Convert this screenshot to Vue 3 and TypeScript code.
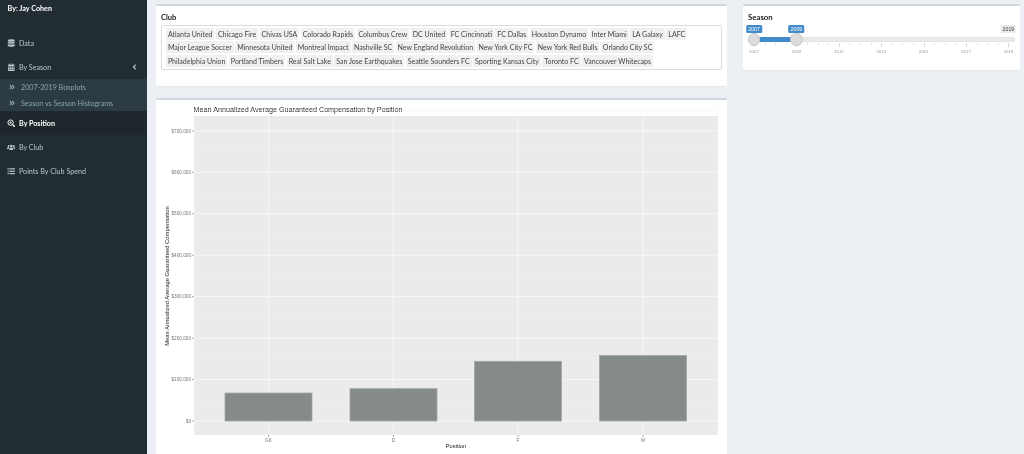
<script setup lang="ts">
interface NavItem { label: string; icon: string; active?: boolean; caret?: boolean }

const navTop: NavItem[] = [
  { label: 'Data', icon: 'db' },
  { label: 'By Season', icon: 'cal', caret: true },
]
const subItems = ['2007-2019 Boxplots', 'Season vs Season Histograms']
const navBottom: NavItem[] = [
  { label: 'By Position', icon: 'search', active: true },
  { label: 'By Club', icon: 'users' },
  { label: 'Points By Club Spend', icon: 'list' },
]

const clubRows = [
  ['Atlanta United', 'Chicago Fire', 'Chivas USA', 'Colorado Rapids', 'Columbus Crew', 'DC United', 'FC Cincinnati', 'FC Dallas', 'Houston Dynamo', 'Inter Miami', 'LA Galaxy', 'LAFC'],
  ['Major League Soccer', 'Minnesota United', 'Montreal Impact', 'Nashville SC', 'New England Revolution', 'New York City FC', 'New York Red Bulls', 'Orlando City SC'],
  ['Philadelphia Union', 'Portland Timbers', 'Real Salt Lake', 'San Jose Earthquakes', 'Seattle Sounders FC', 'Sporting Kansas City', 'Toronto FC', 'Vancouver Whitecaps'],
]

// slider geometry, in px from the left of the slider area
const sliderStart = 11
const sliderStep = 21.2
const ticks = Array.from({ length: 13 }, (_, i) => ({
  year: 2007 + i,
  x: sliderStart + i * sliderStep,
  major: i % 2 === 0,
}))
const minorTicks: number[] = []
for (let i = 0; i < 12; i += 2) {
  for (let j = 1; j < 4; j += 1) minorTicks.push(sliderStart + (i + j / 2) * sliderStep)
}

// plot geometry, in px from the top-left of the plot area
const panel = { x: 38, y: 16, w: 524, h: 319 }
const zeroY = 321
const perHundred = 41.45
const yFor = (v: number) => zeroY - v * perHundred
const majors = [0, 1, 2, 3, 4, 5, 6, 7]
const minors = [0.5, 1.5, 2.5, 3.5, 4.5, 5.5, 6.5, 7.5]
const money = (v: number) => (v === 0 ? '$0' : `$${v}00,000`)
const bars = [
  { pos: 'GK', cx: 112.5, value: 0.675 },
  { pos: 'D', cx: 237.5, value: 0.78 },
  { pos: 'F', cx: 362, value: 1.44 },
  { pos: 'M', cx: 487, value: 1.58 },
]
</script>

<template>
  <div class="page">
    <aside class="sidebar">
      <div class="brand">By: Jay Cohen</div>
      <nav class="nav">
        <div v-for="item in navTop" :key="item.label" class="nav-item">
          <svg class="icon" viewBox="0 0 16 16" aria-hidden="true">
            <g v-if="item.icon === 'db'" fill="currentColor">
              <ellipse cx="8" cy="3" rx="6.5" ry="2.4" />
              <path d="M1.5 4.8C3 6.6 13 6.6 14.5 4.8V7.6C13 9.4 3 9.4 1.5 7.6Z" />
              <path d="M1.5 9.2C3 11 13 11 14.5 9.2V12.6C13 15 3 15 1.5 12.6Z" />
            </g>
            <g v-else fill="currentColor">
              <path d="M2 3h12v2.6H2Z" />
              <rect x="4.4" y="1" width="1.8" height="3" />
              <rect x="9.8" y="1" width="1.8" height="3" />
              <path d="M2 6.6h12V15H2Zm1.4 1.3v1.6h2V7.9Zm3.6 0v1.6h2V7.9Zm3.6 0v1.6h2V7.9ZM3.4 11v1.8h2V11Zm3.6 0v1.8h2V11Zm3.6 0v1.8h2V11Z" fill-rule="evenodd" />
            </g>
          </svg>
          <span>{{ item.label }}</span>
          <svg v-if="item.caret" class="caret" viewBox="0 0 6 8" aria-hidden="true">
            <path d="M4.6 1 1.6 4l3 3" fill="none" stroke="currentColor" stroke-width="1.6" />
          </svg>
        </div>
        <div class="submenu">
          <div v-for="sub in subItems" :key="sub" class="sub-item">
            <svg class="dbl" viewBox="0 0 8 8" aria-hidden="true">
              <path d="M1 1.2 3.6 4 1 6.8M4.2 1.2 6.8 4 4.2 6.8" fill="none" stroke="currentColor" stroke-width="1.5" />
            </svg>
            <span>{{ sub }}</span>
          </div>
        </div>
        <div v-for="item in navBottom" :key="item.label" class="nav-item" :class="{ active: item.active }">
          <svg class="icon" viewBox="0 0 16 16" aria-hidden="true">
            <g v-if="item.icon === 'search'" fill="none" stroke="currentColor">
              <circle cx="6.8" cy="6.8" r="5" stroke-width="1.8" />
              <path d="M10.6 10.6 14.6 14.6" stroke-width="2.6" />
              <path d="M4.4 6.8h4.8M6.8 4.4v4.8" stroke-width="1.3" />
            </g>
            <g v-else-if="item.icon === 'users'" fill="currentColor">
              <circle cx="8" cy="5.6" r="2.5" />
              <path d="M4.2 13c0-3 1.4-4.4 3.8-4.4s3.8 1.4 3.8 4.4Z" />
              <circle cx="3" cy="5.6" r="1.7" />
              <circle cx="13" cy="5.6" r="1.7" />
              <path d="M0 11.2c0-2.2.9-3.6 3-3.6.5 0 .9.1 1.2.3-.7.8-1.1 1.9-1.2 3.3ZM16 11.2c0-2.2-.9-3.6-3-3.6-.5 0-.9.1-1.2.3.7.8 1.1 1.9 1.2 3.3Z" />
            </g>
            <g v-else fill="currentColor">
              <rect x="1" y="2.4" width="2.4" height="2.2" />
              <rect x="4.4" y="2.4" width="10.6" height="2.2" />
              <rect x="1" y="6.9" width="2.4" height="2.2" />
              <rect x="4.4" y="6.9" width="10.6" height="2.2" />
              <rect x="1" y="11.4" width="2.4" height="2.2" />
              <rect x="4.4" y="11.4" width="10.6" height="2.2" />
            </g>
          </svg>
          <span>{{ item.label }}</span>
        </div>
      </nav>
    </aside>

    <main class="content">
      <div class="left">
        <section class="box club-box">
          <div class="label">Club</div>
          <div class="select">
            <div v-for="(row, r) in clubRows" :key="r" class="chip-row">
              <span v-for="club in row" :key="club" class="chip">{{ club }}</span>
            </div>
          </div>
        </section>

        <section class="box plot-box">
          <svg class="plot" viewBox="0 0 571 354" width="571" height="354" role="img">
            <text x="37.6" y="12" class="p-title">Mean Annualized Average Guaranteed Compensation by Position</text>
            <rect :x="panel.x" :y="panel.y" :width="panel.w" :height="panel.h" fill="#ebebeb" />
            <line v-for="m in minors" :key="'n' + m" :x1="panel.x" :x2="panel.x + panel.w" :y1="yFor(m)" :y2="yFor(m)" stroke="#f1f1f1" stroke-width="0.6" />
            <line v-for="m in majors" :key="'j' + m" :x1="panel.x" :x2="panel.x + panel.w" :y1="yFor(m)" :y2="yFor(m)" stroke="#f8f8f8" stroke-width="0.9" />
            <line v-for="b in bars" :key="'v' + b.pos" :x1="b.cx" :x2="b.cx" :y1="panel.y" :y2="panel.y + panel.h" stroke="#f8f8f8" stroke-width="0.9" />
            <rect v-for="b in bars" :key="b.pos" :x="b.cx - 43.5" :y="yFor(b.value)" width="87" :height="zeroY - yFor(b.value)" fill="#848b88" stroke="#a3a8a6" stroke-width="0.8" />
            <g v-for="m in majors" :key="'l' + m">
              <line :x1="panel.x - 2" :x2="panel.x" :y1="yFor(m)" :y2="yFor(m)" stroke="#555" stroke-width="0.5" />
              <text :x="panel.x - 3" :y="yFor(m) + 1.7" text-anchor="end" class="tick">{{ money(m) }}</text>
            </g>
            <g v-for="b in bars" :key="'x' + b.pos">
              <line :x1="b.cx" :x2="b.cx" :y1="panel.y + panel.h" :y2="panel.y + panel.h + 2" stroke="#555" stroke-width="0.5" />
              <text :x="b.cx" :y="panel.y + panel.h + 6.5" text-anchor="middle" class="tick">{{ b.pos }}</text>
            </g>
            <text x="300" y="348.2" text-anchor="middle" class="axis">Position</text>
            <text transform="translate(13 176) rotate(-90)" text-anchor="middle" class="axis y-axis">Mean Annualized Average Guaranteed Compensation</text>
          </svg>
        </section>
      </div>

      <section class="box season-box">
        <div class="label season-label">Season</div>
        <div class="slider">
          <span class="bubble on" :style="{ left: ticks[0].x + 'px' }">2007</span>
          <span class="bubble on" :style="{ left: ticks[2].x + 'px' }">2009</span>
          <span class="bubble" :style="{ left: ticks[12].x + 'px' }">2019</span>
          <div class="track"></div>
          <div class="fill" :style="{ left: ticks[0].x + 'px', width: ticks[2].x - ticks[0].x + 'px' }"></div>
          <i v-for="x in minorTicks" :key="x" class="minor" :style="{ left: x + 'px' }"></i>
          <template v-for="t in ticks" :key="t.year">
            <template v-if="t.major">
              <i class="major" :style="{ left: t.x + 'px' }"></i>
              <span class="year" :style="{ left: t.x + 'px' }">{{ t.year }}</span>
            </template>
          </template>
          <b class="handle" :style="{ left: ticks[0].x + 'px' }"></b>
          <b class="handle" :style="{ left: ticks[2].x + 'px' }"></b>
        </div>
      </section>
    </main>
  </div>
</template>

<style>
html, body { margin: 0; height: 100%; overflow: hidden; background: #ecf0f5; }
</style>

<style scoped>
.page {
  display: flex;
  height: 454px;
  overflow: hidden;
  background: #ecf0f5;
  font-family: Lato, "Noto Sans", sans-serif;
  filter: blur(0.4px);
}
.sidebar {
  flex: 0 0 147px;
  background: #222d32;
  color: #b8c7ce;
  font-size: 7.15px;
}
.brand {
  padding: 3.5px 7.5px 0;
  height: 31px;
  box-sizing: border-box;
  font-size: 7.2px;
  line-height: 10px;
  color: #fff;
  font-weight: 700;
}
.nav-item {
  display: flex;
  align-items: center;
  height: 24px;
  padding: 0 0 0 6.5px;
  gap: 4px;
  box-sizing: border-box;
}
.nav-item.active {
  background: #1e282c;
  color: #fff;
  font-weight: 700;
}
.icon { width: 8.5px; height: 8.5px; flex: none; }
.caret { width: 5px; height: 6px; margin-left: auto; margin-right: 10px; }
.submenu {
  background: #2c3b41;
  height: 32px;
  color: #8aa4af;
}
.sub-item {
  display: flex;
  align-items: center;
  height: 16px;
  padding-left: 9px;
  gap: 6px;
}
.dbl { width: 6px; height: 6px; flex: none; }

.content {
  flex: 1;
  display: grid;
  grid-template-columns: 571px 277px;
  column-gap: 16px;
  padding: 4px 0 0 9px;
  align-items: start;
}
.left { display: flex; flex-direction: column; gap: 12px; }
.box {
  background: #fff;
  border-top: 2px solid #d2d6de;
  border-radius: 2px;
  box-sizing: border-box;
  box-shadow: 0 0.5px 0.5px rgba(0, 0, 0, 0.06);
}
.club-box { height: 82px; padding: 6px 5px 0; }
.label {
  font-size: 7.5px;
  line-height: 11px;
  font-weight: 700;
  color: #222;
}
.select {
  margin-top: 2px;
  height: 45px;
  border: 1px solid #dcdcdc;
  border-radius: 2px;
  box-sizing: border-box;
  padding: 2px 4px;
  display: flex;
  flex-direction: column;
  gap: 1.4px;
}
.chip-row { display: flex; gap: 1.6px; }
.chip {
  background: #f0f0f0;
  color: #444;
  font-size: 7.03px;
  line-height: 12px;
  padding: 0 1.9px;
  white-space: nowrap;
  border-radius: 1px;
}
.plot-box { height: 357px; }
.plot { display: block; }
.p-title { font: 7.2px "Liberation Sans", Arial, sans-serif; fill: #222; }
.tick { font: 4.7px "Liberation Sans", Arial, sans-serif; fill: #777; }
.axis { font: 5.8px "Liberation Sans", Arial, sans-serif; fill: #222; }
.y-axis { font-size: 5.85px; }

.season-box { height: 66px; padding: 6px 6px 0; }
.season-label { margin-left: -1px; font-size: 7.8px; }
.slider { position: relative; height: 36px; margin: 1px -6px 0; }
.track {
  position: absolute;
  left: 7px;
  right: 5px;
  top: 13px;
  height: 5px;
  border-radius: 3px;
  background: #ebebeb;
  box-shadow: inset 0 0 0 0.5px #ddd;
}
.fill {
  position: absolute;
  top: 13px;
  height: 5px;
  background: #428bca;
}
.bubble {
  position: absolute;
  top: 0.5px;
  transform: translateX(-50%);
  font: 5.2px/8px "Liberation Sans", Arial, sans-serif;
  padding: 0 1.5px;
  background: #e9e9e9;
  color: #444;
  border-radius: 1.5px;
}
.bubble.on { background: #428bca; color: #fff; padding: 0 2px; }
.minor, .major {
  position: absolute;
  width: 0.6px;
}
.minor { top: 18.5px; height: 2px; background: #dde2e6; }
.major { top: 18.5px; height: 4px; background: #c4dbec; }
.year {
  position: absolute;
  top: 25px;
  transform: translateX(-50%);
  font: 4.4px/6px "Liberation Sans", Arial, sans-serif;
  color: #999;
}
.handle {
  position: absolute;
  top: 9px;
  width: 12.5px;
  height: 12.5px;
  margin-left: -6.25px;
  box-sizing: border-box;
  border-radius: 50%;
  background: #dcdcdc;
  border: 1px solid #c8c8c8;
}
</style>
